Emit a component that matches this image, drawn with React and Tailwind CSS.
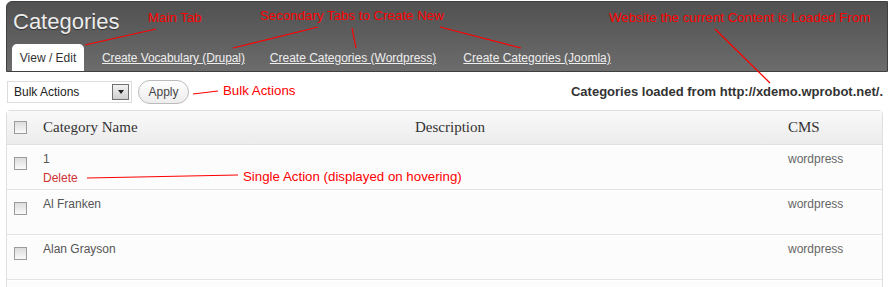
import React from "react";

const rows = [
  { name: "1", cms: "wordpress", actions: true, h: "h-[45px]" },
  { name: "Al Franken", cms: "wordpress", h: "h-[45px]" },
  { name: "Alan Grayson", cms: "wordpress", h: "h-[45px]" },
  { name: "", cms: "", h: "h-[45px]" },
];

const Checkbox = () => (
  <span className="block w-[13px] h-[13px] border border-[#9c9c9c] bg-gradient-to-b from-[#dcdcdc] to-[#fafafa]" />
);

const Note = ({ className, children }) => (
  <span className={`absolute text-[13.3px] leading-none text-[#ff0000] whitespace-nowrap ${className}`}>
    {children}
  </span>
);

const App = () => {
  return (
    <div className="relative w-[890px] h-[287px] bg-white overflow-hidden font-['Liberation_Sans',Arial,sans-serif]">
      {/* header */}
      <div className="ml-[6px] mr-[2px] mt-[1px] h-[71px] rounded-tl-[6px] border border-[#3f3f3f] bg-gradient-to-b from-[#515151] to-[#6c6c6c] flex flex-col justify-between">
        <h1 className="pl-[6px] pt-[7px] text-[22px] leading-[26px] text-[#ececec] [text-shadow:0_1px_1px_#333]">
          Categories
        </h1>
        <div className="flex items-end pl-[5px] text-[12px]">
          <span className="w-[72px] h-[27px] bg-white rounded-t-[5px] flex items-center justify-center text-[#333]">
            View / Edit
          </span>
          <a className="ml-[18px] mb-[4px] text-[#eeeeee] underline tracking-[-0.1px]">Create Vocabulary (Drupal)</a>
          <a className="ml-[25px] mb-[4px] text-[#eeeeee] underline">Create Categories (Wordpress)</a>
          <a className="ml-[27px] mb-[4px] text-[#eeeeee] underline">Create Categories (Joomla)</a>
        </div>
      </div>

      {/* toolbar */}
      <div className="flex items-center mt-[8px] pl-[7px] pr-[7px] h-[24px]">
        <div className="w-[125px] h-[22px] border border-[#dcdcdc] bg-white flex items-center justify-between pl-[6px] pr-[2px] text-[12px] text-[#222]">
          <span>Bulk Actions</span>
          <span className="w-[17px] h-[16px] border border-[#707070] bg-gradient-to-b from-[#f2f2f2] to-[#cfcfcf] flex items-center justify-center">
            <span className="w-0 h-0 border-l-[3px] border-r-[3px] border-t-[4px] border-l-transparent border-r-transparent border-t-[#222]" />
          </span>
        </div>
        <button className="ml-[6px] w-[51px] h-[24px] rounded-full border border-[#bbbbbb] bg-gradient-to-b from-[#fefefe] to-[#ededed] text-[12px] text-[#464646]">
          Apply
        </button>
        <span className="ml-auto text-[13px] font-bold text-[#333]">
          Categories loaded from http://xdemo.wprobot.net/.
        </span>
      </div>

      {/* table */}
      <div className="ml-[6px] mr-[7px] mt-[6px] border border-[#dfdfdf] rounded-t-[4px]">
        <div className="h-[34px] flex items-center bg-gradient-to-b from-[#f9f9f9] to-[#ececec] border-b border-[#dfdfdf] font-['Liberation_Serif',serif] text-[15px] text-[#333]">
          <span className="w-[36px] pl-[7px]"><Checkbox /></span>
          <span className="w-[372px]">Category Name</span>
          <span className="w-[373px]">Description</span>
          <span>CMS</span>
        </div>
        {rows.map((r, i) => (
          <div key={i} className={`${r.h} flex items-start bg-[#fcfcfc] border-b border-[#e3e3e3] border-t border-t-white text-[12px] text-[#555]`}>
            <span className="w-[36px] pl-[7px] pt-[11px]">{r.name && <Checkbox />}</span>
            <div className="w-[745px] pt-[6px] flex flex-col">
              <span className="leading-[14px]">{r.name}</span>
              {r.actions && <span className="mt-[3px] text-[#cc3333]">Delete</span>}
            </div>
            <span className="pt-[6px] leading-[14px] text-[#666]">{r.cms}</span>
          </div>
        ))}
      </div>

      {/* annotations */}
      <Note className="left-[148px] top-[11px]">Main Tab</Note>
      <Note className="left-[260px] top-[9px]">Secondary Tabs to Create New</Note>
      <Note className="left-[609px] top-[11px]">Website the current Content is Loaded From</Note>
      <Note className="left-[223px] top-[84px]">Bulk Actions</Note>
      <Note className="left-[243px] top-[170px]">Single Action (displayed on hovering)</Note>
      <svg className="absolute inset-0 pointer-events-none" width="890" height="287">
        <g stroke="#ff0000" strokeWidth="1.2" fill="none">
          <line x1="85" y1="45" x2="156" y2="29" />
          <line x1="233" y1="48" x2="318" y2="27" />
          <line x1="352" y1="28" x2="356" y2="48" />
          <line x1="440" y1="27" x2="521" y2="48" />
          <line x1="715" y1="29" x2="770" y2="83" />
          <line x1="193" y1="94" x2="218" y2="91" />
          <line x1="87" y1="178" x2="238" y2="175" />
        </g>
      </svg>
    </div>
  );
};

export default App;
